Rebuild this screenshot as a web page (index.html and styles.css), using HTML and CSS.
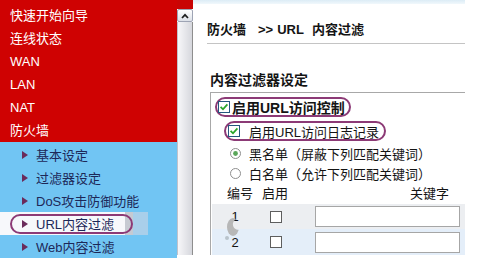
FILE: index.html
```html
<!DOCTYPE html>
<html lang="zh">
<head>
<meta charset="utf-8">
<title>URL 内容过滤</title>
<link rel="stylesheet" href="styles.css">
</head>
<body>
<div class="screen">
  <div class="frame">
    <nav class="nav">
      <ul class="menu-main">
        <li>快速开始向导</li>
        <li>连线状态</li>
        <li>WAN</li>
        <li>LAN</li>
        <li>NAT</li>
        <li>防火墙</li>
      </ul>
      <ul class="menu-sub">
        <li><span class="tri"></span>基本设定</li>
        <li><span class="tri"></span>过滤器设定</li>
        <li><span class="tri"></span>DoS攻击防御功能</li>
        <li class="active"><span class="tri"></span>URL内容过滤<span class="oval-nav"></span></li>
        <li><span class="tri"></span>Web内容过滤</li>
      </ul>
    </nav>
    <div class="scrollbar">
      <div class="sb-top"></div>
      <div class="sb-btn">
        <svg width="8" height="6" viewBox="0 0 8 6"><polyline points="1,5 4,1.8 7,5" fill="none" stroke="#1e1e1e" stroke-width="1.7"/></svg>
      </div>
      <div class="sb-track"></div>
    </div>
  </div>
  <main class="main">
    <div class="topband"></div>
    <h1 class="title"><span>防火墙</span><span class="t-sep">&gt;&gt;</span><span class="t-url">URL</span><span class="t-name">内容过滤</span></h1>
    <h2 class="section">内容过滤器设定</h2>
    <div class="box">
      <label class="ctl ctl1">
        <svg class="cb" width="12" height="12" viewBox="0 0 12 12"><rect x="0.5" y="0.5" width="11" height="11" fill="#fff" stroke="#25577f"/><polyline points="2.6,5.8 5,8.3 9.4,3.4" fill="none" stroke="#2aa52a" stroke-width="1.8"/></svg>
        <span class="ctl1-text">启用URL访问控制</span>
      </label>
      <label class="ctl ctl2">
        <svg class="cb" width="12" height="12" viewBox="0 0 12 12"><rect x="0.5" y="0.5" width="11" height="11" fill="#fff" stroke="#25577f"/><polyline points="2.6,5.8 5,8.3 9.4,3.4" fill="none" stroke="#2aa52a" stroke-width="1.8"/></svg>
        <span class="ctl2-text">启用URL访问日志记录</span>
      </label>
      <div class="radio-row first">
        <svg class="rb" width="11" height="11" viewBox="0 0 11 11"><circle cx="5.5" cy="5.5" r="5" fill="#fff" stroke="#8e8e8e"/><circle cx="5.5" cy="5.5" r="2.4" fill="#5aa65a"/></svg>
        <span>黑名单（屏蔽下列匹配关键词）</span>
      </div>
      <div class="radio-row">
        <svg class="rb" width="11" height="11" viewBox="0 0 11 11"><circle cx="5.5" cy="5.5" r="5" fill="#fff" stroke="#8e8e8e"/></svg>
        <span>白名单（允许下列匹配关键词）</span>
      </div>
      <div class="thead">
        <span class="h-num">编号</span>
        <span class="h-en">启用</span>
        <span class="h-key">关键字</span>
      </div>
      <div class="rows">
        <div class="row row1">
          <span class="num">1</span>
          <span class="cb-col"><span class="cb-empty"></span></span>
          <span class="input"></span>
        </div>
        <div class="row row2">
          <span class="num">2</span>
          <span class="cb-col"><span class="cb-empty"></span></span>
          <span class="input"></span>
        </div>
        <span class="wm-crescent"></span>
        <span class="wm-dot"></span>
      </div>
    </div>
  </main>
</div>
</body>
</html>
```
FILE: styles.css
```css
* {
  box-sizing: border-box;
  margin: 0;
  padding: 0;
}

html, body {
  width: 488px;
  height: 265px;
  overflow: hidden;
  background: #fff;
}

body {
  font-family: "Liberation Sans", "Noto Sans CJK SC", sans-serif;
  font-size: 13px;
  color: #141414;
}

.screen {
  display: flex;
  height: 255px;
}

/* ---------- left frame ---------- */
.frame {
  display: flex;
  width: 193px;
  flex: none;
}

.nav {
  width: 177px;
  display: flex;
  flex-direction: column;
}

.menu-main {
  list-style: none;
  background: #cf0202;
  height: 143px;
  padding-top: 4px;
}

.menu-main li {
  height: 23px;
  line-height: 23px;
  padding-left: 10px;
  color: #fff;
}

.menu-sub {
  list-style: none;
  flex: 1;
  background: #71c5f3;
  padding-top: 1px;
}

.menu-sub li {
  position: relative;
  height: 23px;
  display: flex;
  align-items: center;
  color: #1d2858;
}

.tri {
  width: 0;
  height: 0;
  border-left: 6px solid #6b2b5b;
  border-top: 4px solid transparent;
  border-bottom: 4px solid transparent;
  margin-left: 22px;
  margin-right: 8px;
}

.menu-sub li.active {
  background: linear-gradient(to right, #f7f8fb 0 125px, #c6cad2 125px 133px, #a9cfea 133px 148px, transparent 148px);
}

.oval-nav {
  position: absolute;
  left: 10px;
  top: 2px;
  width: 123px;
  height: 20px;
  border: 2px solid #8c3a76;
  border-radius: 10px;
}

.scrollbar {
  width: 16px;
  display: flex;
  flex-direction: column;
}

.sb-top {
  height: 9px;
  background: #c90404;
}

.sb-btn {
  height: 13px;
  border: 1px solid #9ea4b4;
  border-radius: 2px;
  background: linear-gradient(#ffffff, #dde1e8);
  display: flex;
  align-items: center;
  justify-content: center;
}

.sb-track {
  flex: 1;
  background: linear-gradient(to right, #f7f7f9, #d6d7dd);
  border-left: 1px solid #c2c2ca;
  border-right: 1px solid #8e8e8e;
}

/* ---------- main ---------- */
.main {
  flex: 1;
  display: flex;
  flex-direction: column;
  padding: 0 23px 0 14px;
}

.topband {
  height: 4px;
  width: 272px;
  margin-left: -14px;
  background: linear-gradient(#dcecf6, #f1f8fc);
}

.title {
  display: flex;
  font-size: 13px;
  font-weight: bold;
  line-height: 20px;
  margin-top: 16px;
  padding-bottom: 3px;
  border-bottom: 1px solid #c4c4c4;
}

.t-sep { margin-left: 12px; }
.t-url { margin-left: 4px; }
.t-name { margin-left: 8px; }

.section {
  font-size: 14px;
  font-weight: bold;
  line-height: 20px;
  margin: 26px 0 2px 3px;
}

.box {
  flex: 1;
  margin-left: 3px;
  border-left: 1px solid #a8a8a8;
  border-top: 1px solid #a8a8a8;
  padding-left: 4px;
  display: flex;
  flex-direction: column;
}

.ctl {
  align-self: flex-start;
  display: inline-flex;
  align-items: center;
  height: 20px;
  margin-top: 4px;
  border: 2px solid #8c3a76;
  border-radius: 10px;
}

.ctl1 {
  padding: 0 4px 0 1px;
  font-size: 14px;
  font-weight: bold;
}

.ctl1-text { margin-left: 2px; }

.ctl2 {
  margin-left: 9px;
  padding: 0 5px 0 2px;
}

.ctl2-text { margin-left: 9px; }

.radio-row {
  height: 20px;
  display: flex;
  align-items: center;
  padding-left: 15px;
}

.radio-row.first { margin-top: 2px; }

.radio-row span { margin-left: 8px; }

.thead {
  height: 18px;
  display: flex;
  align-items: center;
}

.h-num { margin-left: 12px; }
.h-en { margin-left: 9px; }
.h-key { margin-left: auto; margin-right: 16px; }

.rows {
  position: relative;
  margin: 3px 0 0 -3px;
}

.row {
  display: grid;
  grid-template-columns: 46px 57px 145px;
  align-items: center;
}

.row1 {
  height: 25px;
  background: #eceef1;
}

.row2 {
  height: 26px;
  background: #e4eef9;
}

.num {
  text-align: center;
}

.cb-col {
  display: flex;
  padding-left: 12px;
}

.cb-empty {
  width: 12px;
  height: 12px;
  border: 1px solid #5e5e5e;
  background: #fff;
}

.input {
  height: 21px;
  border: 1px solid #a6a6a6;
  background: #fff;
}

.wm-crescent {
  position: absolute;
  left: 15px;
  top: 14px;
  width: 12px;
  height: 18px;
  border-radius: 50%;
  background: radial-gradient(circle at 95% 35%, transparent 5px, #b7b7b7 6px);
}

.wm-dot {
  position: absolute;
  left: 13px;
  top: 32px;
  width: 4px;
  height: 4px;
  border-radius: 50%;
  background: #b9c3cc;
}
```
